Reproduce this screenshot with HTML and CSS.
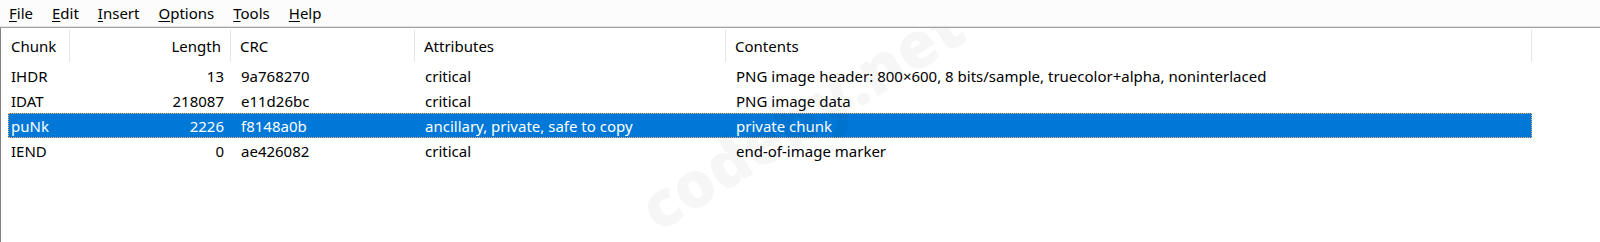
FILE: index.html
```html
<!DOCTYPE html>
<html>
<head>
<meta charset="utf-8">
<link rel="stylesheet" href="styles.css">
</head>
<body>
<div class="app">
  <div class="menubar">
    <span class="menu"><u>F</u>ile</span>
    <span class="menu"><u>E</u>dit</span>
    <span class="menu"><u>I</u>nsert</span>
    <span class="menu"><u>O</u>ptions</span>
    <span class="menu"><u>T</u>ools</span>
    <span class="menu"><u>H</u>elp</span>
  </div>
  <div class="list">
    <div class="header">
      <div class="hcell c1">Chunk</div>
      <div class="hcell c2 right">Length</div>
      <div class="hcell c3">CRC</div>
      <div class="hcell c4">Attributes</div>
      <div class="hcell c5">Contents</div>
      <div class="hcell c6"></div>
    </div>
    <div class="rows">
      <div class="row">
        <div class="cell">IHDR</div>
        <div class="cell right">13</div>
        <div class="cell">9a768270</div>
        <div class="cell">critical</div>
        <div class="cell">PNG image header: 800×600, 8 bits/sample, truecolor+alpha, noninterlaced</div>
      </div>
      <div class="row">
        <div class="cell">IDAT</div>
        <div class="cell right">218087</div>
        <div class="cell">e11d26bc</div>
        <div class="cell">critical</div>
        <div class="cell">PNG image data</div>
      </div>
      <div class="row selected">
        <div class="cell">puNk</div>
        <div class="cell right">2226</div>
        <div class="cell">f8148a0b</div>
        <div class="cell">ancillary, private, safe to copy</div>
        <div class="cell">private chunk</div>
      </div>
      <div class="row">
        <div class="cell">IEND</div>
        <div class="cell right">0</div>
        <div class="cell">ae426082</div>
        <div class="cell">critical</div>
        <div class="cell">end-of-image marker</div>
      </div>
    </div>
    <div class="watermark">codeby.net</div>
  </div>
</div>
</body>
</html>
```
FILE: styles.css
```css
html, body {
  margin: 0;
  padding: 0;
  background: #ffffff;
}
body {
  font-family: "Noto Sans", "Open Sans", sans-serif;
  font-size: 15px;
  color: #000000;
  width: 1600px;
  height: 242px;
  overflow: hidden;
}
.app {
  display: flex;
  flex-direction: column;
  height: 242px;
}
.menubar {
  height: 26px;
  display: flex;
  align-items: center;
  background: #fcfcfc;
  padding-left: 9px;
  border-bottom: 1px solid #e3e3e3;
}
.menu {
  margin-right: 19px;
  line-height: 26px;
}
.menu u {
  text-decoration-thickness: 1px;
  text-underline-offset: 2px;
}
.list {
  position: relative;
  flex: 1;
  border-top: 1px solid #a0a0a0;
  border-left: 1px solid #828282;
  background: #ffffff;
  overflow: hidden;
}
.header {
  display: grid;
  grid-template-columns: 69px 161px 184px 311px 806px 1fr;
  height: 35px;
  padding-top: 2px;
  box-sizing: border-box;
}
.hcell {
  display: flex;
  align-items: center;
  padding: 0 9px;
  border-right: 1px solid #e5e5e5;
  white-space: nowrap;
  height: 32px;
}
.hcell.c1 { padding-left: 10px; }
.hcell.c6 { border-right: none; }
.right { justify-content: flex-end; }
.rows {
  display: flex;
  flex-direction: column;
}
.row {
  display: grid;
  grid-template-columns: 62px 161px 184px 311px 806px;
  margin-left: 7px;
  width: 1524px;
  height: 25px;
  box-sizing: border-box;
  border: 1px solid transparent;
}
.cell {
  display: flex;
  align-items: center;
  padding: 0 9px;
  white-space: nowrap;
  overflow: hidden;
}
.row .cell:first-child { padding-left: 2px; }
.row .cell:nth-child(2) { padding-right: 8px; }
.row.selected {
  background: #0078d7;
  color: #ffffff;
  border: 1px dotted #f5b26b;
}
.watermark {
  position: absolute;
  left: 800px;
  top: 88px;
  font-family: "Open Sans", sans-serif;
  font-weight: 800;
  font-size: 64px;
  line-height: 1;
  color: rgba(0, 0, 0, 0.035);
  transform: translate(-50%, -50%) rotate(-32deg);
  pointer-events: none;
  white-space: nowrap;
}
```
